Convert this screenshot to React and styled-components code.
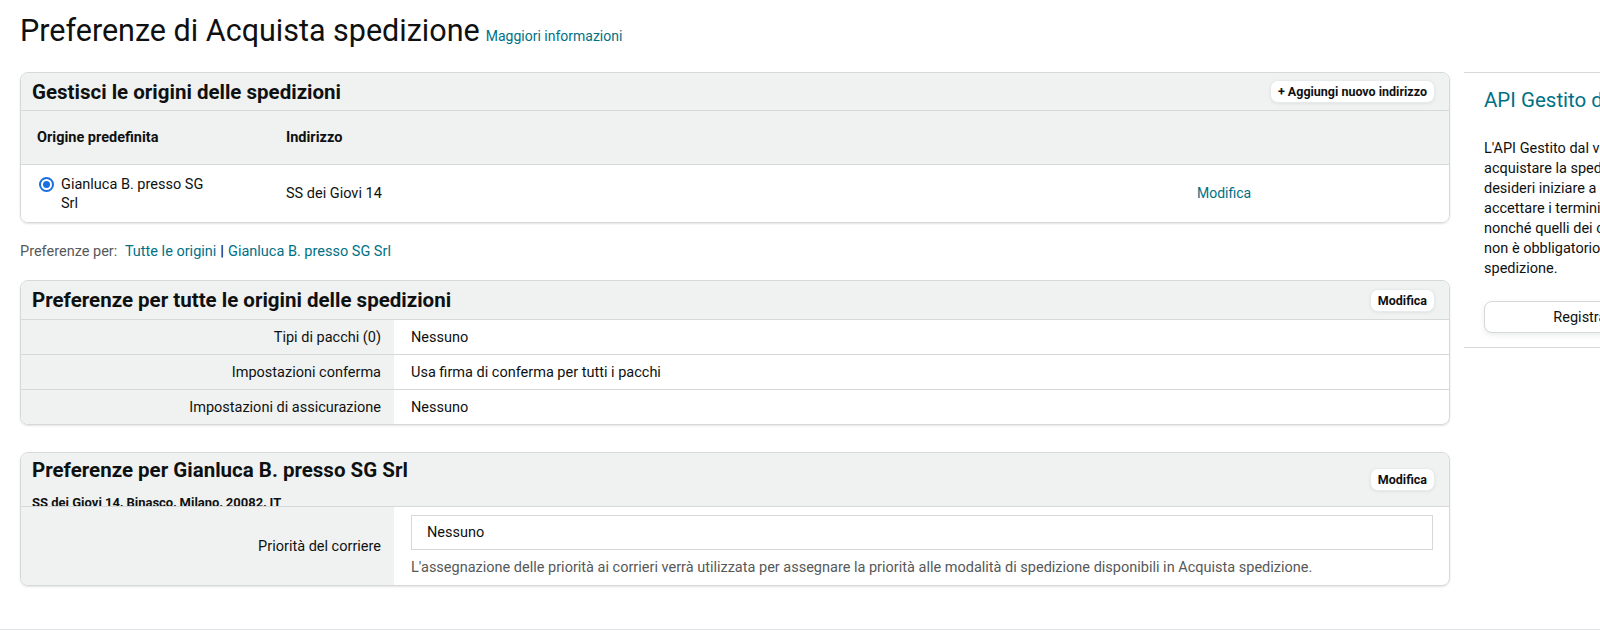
import React from "react";
import styled, { createGlobalStyle } from "styled-components";

const GlobalStyle = createGlobalStyle`
  body {
    margin: 0;
    font-family: Roboto, "Liberation Sans", sans-serif;
    color: #0f1111;
    background: #fff;
  }
`;

const Page = styled.div`
  width: 1600px;
  height: 630px;
  overflow: hidden;
`;

const Top = styled.div`
  padding: 0 20px;
`;

const TitleRow = styled.div`
  display: flex;
  align-items: baseline;
  gap: 6px;
  padding-top: 12px;
  height: 72px;
  box-sizing: border-box;
`;

const PageTitle = styled.h1`
  margin: 0;
  font-size: 30.5px;
  font-weight: 400;
  line-height: 38px;
`;

const Link = styled.a`
  color: #007185;
  font-size: ${(p) => p.size || 14}px;
  text-decoration: none;
  cursor: pointer;
`;

const Layout = styled.div`
  display: grid;
  grid-template-columns: 1430px 240px;
  gap: 14px;
  align-items: start;
`;

const Main = styled.div`
  display: flex;
  flex-direction: column;
`;

const Card = styled.section`
  border: 1px solid #d5d9d9;
  border-radius: 8px;
  overflow: hidden;
  box-shadow: 0 1px 2px rgba(15, 17, 17, 0.12);
  margin-bottom: ${(p) => p.gap || 0}px;
`;

const CardHeader = styled.header`
  display: flex;
  align-items: center;
  justify-content: space-between;
  background: #f0f2f2;
  height: ${(p) => p.h || 36}px;
  padding: 0 14px 0 11px;
  border-bottom: 1px solid #d5d9d9;
  overflow: hidden;
`;

const HeaderText = styled.div`
  display: flex;
  flex-direction: column;
  align-self: flex-start;
  margin-top: -1px;
`;

const CardTitle = styled.h2`
  margin: 0;
  font-size: 20.5px;
  font-weight: 700;
  line-height: 36px;
  color: #0f1111;
`;

const Address = styled.div`
  font-size: 13px;
  font-weight: 700;
  line-height: 16px;
  margin-top: 7px;
  white-space: nowrap;
`;

const SmallButton = styled.button`
  font-family: inherit;
  font-size: 12.5px;
  font-weight: 700;
  color: #0f1111;
  background: #fff;
  border: 1px solid #e7eaea;
  border-radius: 8px;
  height: 23px;
  padding: 0 7px;
  box-shadow: 0 1px 3px rgba(213, 217, 217, 0.6);
  cursor: pointer;
`;

const OriginGrid = styled.div`
  display: grid;
  grid-template-columns: 249px 911px 1fr;
  padding-left: 16px;
  align-items: center;
  background: ${(p) => (p.head ? "#f0f2f2" : "#fff")};
  height: ${(p) => p.h}px;
  border-bottom: ${(p) => (p.head ? "1px solid #d5d9d9" : "none")};
  font-size: 14.5px;
  font-weight: ${(p) => (p.head ? 700 : 400)};
`;

const RadioLabel = styled.label`
  display: flex;
  align-items: flex-start;
  gap: 7px;
  line-height: 19px;
  span {
    max-width: 160px;
  }
`;

const Radio = styled.span`
  flex: none;
  width: 15px;
  height: 15px;
  margin: 2px 0 0 2px;
  border-radius: 50%;
  box-sizing: border-box;
  border: 2px solid #1a6fe0;
  display: flex;
  align-items: center;
  justify-content: center;
  &::after {
    content: "";
    width: 7px;
    height: 7px;
    border-radius: 50%;
    background: #1a6fe0;
  }
`;

const Filter = styled.div`
  font-size: 14.5px;
  color: #565959;
  height: 57px;
  display: flex;
  align-items: center;
  gap: 4px;
  span.sep {
    color: #0f1111;
    font-weight: 700;
  }
`;

const PrefRow = styled.div`
  display: grid;
  grid-template-columns: 373px 1fr;
  min-height: ${(p) => p.h || 34}px;
  font-size: 14.5px;
  & + & {
    border-top: 1px solid #d5d9d9;
  }
`;

const PrefLabel = styled.div`
  background: #f0f2f2;
  display: flex;
  align-items: center;
  justify-content: flex-end;
  padding-right: 13px;
`;

const PrefValue = styled.div`
  display: flex;
  flex-direction: column;
  justify-content: center;
  padding: ${(p) => (p.pad ? "8px 16px 9px 17px" : "0 17px")};
`;

const Field = styled.div`
  height: 35px;
  box-sizing: border-box;
  border: 1px solid #d5d9d9;
  display: flex;
  align-items: center;
  padding: 0 15px;
  font-size: 14.5px;
`;

const Help = styled.div`
  color: #565959;
  font-size: 14.5px;
  margin-top: 9px;
`;

const Side = styled.aside`
  border-top: 1px solid #d5d9d9;
  border-bottom: 1px solid #d5d9d9;
  padding: 13px 20px 15px;
  height: 276px;
  box-sizing: border-box;
`;

const SideTitle = styled.h3`
  margin: 0;
  font-size: 20.5px;
  font-weight: 400;
  color: #007185;
  line-height: 28px;
  white-space: nowrap;
`;

const SideText = styled.p`
  margin: 25px 0 22px;
  font-size: 14.5px;
  line-height: 20px;
  span {
    display: block;
    white-space: nowrap;
  }
`;

const WideButton = styled.button`
  width: 100%;
  height: 32px;
  font-family: inherit;
  font-size: 14.5px;
  color: #0f1111;
  background: #fff;
  border: 1px solid #d5d9d9;
  border-radius: 8px;
  box-shadow: 0 2px 5px rgba(213, 217, 217, 0.5);
  white-space: nowrap;
`;

const Footer = styled.div`
  margin-top: 43px;
  border-top: 1px solid #e3e6e6;
`;

const sideLines = [
  "L'API Gestito dal venditore ti consente di",
  "acquistare la spedizione tramite API. Se",
  "desideri iniziare a utilizzarla, devi",
  "accettare i termini e le condizioni di Amazon,",
  "nonché quelli dei corrieri. La registrazione",
  "non è obbligatorio per utilizzare Acquista",
  "spedizione.",
];

const prefs = [
  ["Tipi di pacchi (0)", "Nessuno"],
  ["Impostazioni conferma", "Usa firma di conferma per tutti i pacchi"],
  ["Impostazioni di assicurazione", "Nessuno"],
];

export default function App() {
  return (
    <Page>
      <GlobalStyle />
      <Top>
        <TitleRow>
          <PageTitle>Preferenze di Acquista spedizione</PageTitle>
          <Link>Maggiori informazioni</Link>
        </TitleRow>
        <Layout>
          <Main>
            <Card>
              <CardHeader h={37}>
                <CardTitle>Gestisci le origini delle spedizioni</CardTitle>
                <SmallButton>+ Aggiungi nuovo indirizzo</SmallButton>
              </CardHeader>
              <OriginGrid head h={53}>
                <div>Origine predefinita</div>
                <div>Indirizzo</div>
                <div />
              </OriginGrid>
              <OriginGrid h={57}>
                <RadioLabel>
                  <Radio />
                  <span>Gianluca B. presso SG Srl</span>
                </RadioLabel>
                <div>SS dei Giovi 14</div>
                <div>
                  <Link>Modifica</Link>
                </div>
              </OriginGrid>
            </Card>

            <Filter>
              Preferenze per:&nbsp;
              <Link size={14.5}>Tutte le origini</Link>
              <span className="sep">|</span>
              <Link size={14.5}>Gianluca B. presso SG Srl</Link>
            </Filter>

            <Card gap={27}>
              <CardHeader h={38}>
                <CardTitle>Preferenze per tutte le origini delle spedizioni</CardTitle>
                <SmallButton>Modifica</SmallButton>
              </CardHeader>
              {prefs.map(([label, value]) => (
                <PrefRow key={label}>
                  <PrefLabel>{label}</PrefLabel>
                  <PrefValue>{value}</PrefValue>
                </PrefRow>
              ))}
            </Card>

            <Card>
              <CardHeader h={53}>
                <HeaderText>
                  <CardTitle>Preferenze per Gianluca B. presso SG Srl</CardTitle>
                  <Address>SS dei Giovi 14, Binasco, Milano, 20082, IT</Address>
                </HeaderText>
                <SmallButton>Modifica</SmallButton>
              </CardHeader>
              <PrefRow h={78}>
                <PrefLabel>Priorità del corriere</PrefLabel>
                <PrefValue pad>
                  <Field>Nessuno</Field>
                  <Help>
                    L'assegnazione delle priorità ai corrieri verrà utilizzata per assegnare la
                    priorità alle modalità di spedizione disponibili in Acquista spedizione.
                  </Help>
                </PrefValue>
              </PrefRow>
            </Card>
          </Main>

          <Side>
            <SideTitle>API Gestito dal venditore</SideTitle>
            <SideText>
              {sideLines.map((l) => (
                <span key={l}>{l}</span>
              ))}
            </SideText>
            <WideButton>Registrati</WideButton>
          </Side>
        </Layout>
      </Top>
      <Footer />
    </Page>
  );
}
